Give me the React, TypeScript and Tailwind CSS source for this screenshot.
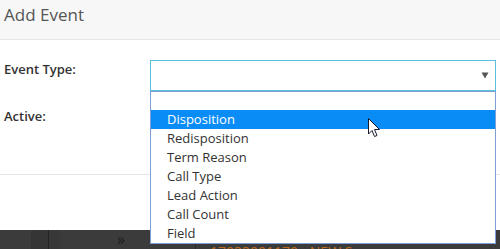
const options = [
  "Disposition",
  "Redisposition",
  "Term Reason",
  "Call Type",
  "Lead Action",
  "Call Count",
  "Field",
];

function App() {
  return (
    <div className="relative w-[500px] h-[249px] overflow-hidden bg-white font-['Open_Sans',sans-serif] text-[#333]">
      {/* Modal header */}
      <div className="h-[40px] bg-[#f7f7f7] border-b border-[#e5e5e5] pl-1 pt-[3px]">
        <h4 className="text-[17px] leading-[24px] text-[#555]">Add Event</h4>
      </div>

      {/* Modal body */}
      <div className="px-1 pt-[20px]">
        <div className="flex">
          <label className="w-[146px] shrink-0 -mt-px text-[13px] leading-[20px] font-semibold">
            Event Type:
          </label>
          <div className="flex-1 h-[31px] border border-[#5bc0de] flex items-center justify-end pr-[6px]">
            <svg width="8" height="7" viewBox="0 0 8 7">
              <path d="M0.5 0.5 H7.5 L4 6.5 Z" fill="#555" />
            </svg>
          </div>
        </div>
        <div className="flex mt-[15px]">
          <label className="w-[146px] shrink-0 text-[13px] leading-[20px] font-semibold">
            Active:
          </label>
        </div>
      </div>

      {/* Modal footer divider */}
      <div className="mt-[48px] border-t border-[#e5e5e5] h-[56px]" />

      {/* Page behind the modal */}
      <div className="flex h-[19px] bg-[#3b3b3b]">
        <div className="w-[31px]" />
        <div className="w-[17px] bg-[#353535]" />
        <div className="w-px bg-[#232323]" />
        <div className="w-[11px] bg-[#383838]" />
        <div className="w-[135px] pl-[57px] text-[16px] leading-[19px] text-[#1d1d1d]">
          »
        </div>
        <div className="w-px bg-[#2a2a2a]" />
        <div className="pl-[14px] pt-[12px] text-[14px] leading-[20px] text-[#b8691d] whitespace-nowrap">
          17033001170 - NEW S
        </div>
      </div>

      {/* Open select list */}
      <ul className="absolute left-[150px] top-[91px] w-[346px] bg-white border border-[#7c9fd6] text-[13px] leading-[19px] text-[#333]">
        <li className="h-[18px]" />
        {options.map((o, i) => (
          <li
            key={o}
            className={
              i === 0
                ? "h-[19px] pl-[16px] bg-[#0a8cf7] text-white"
                : "h-[19px] pl-[16px]"
            }
          >
            {o}
          </li>
        ))}
      </ul>

      {/* Mouse pointer */}
      <svg
        className="absolute left-[368px] top-[118px]"
        width="13"
        height="20"
        viewBox="0 0 13 20"
      >
        <path
          d="M0.5 0.5 V16 L4 12.5 L6.5 18.5 L9 17.5 L6.5 11.5 H11.5 Z"
          fill="#fff"
          stroke="#1a1a2e"
          strokeWidth="1"
          strokeLinejoin="miter"
        />
      </svg>
    </div>
  );
}

export default App;
